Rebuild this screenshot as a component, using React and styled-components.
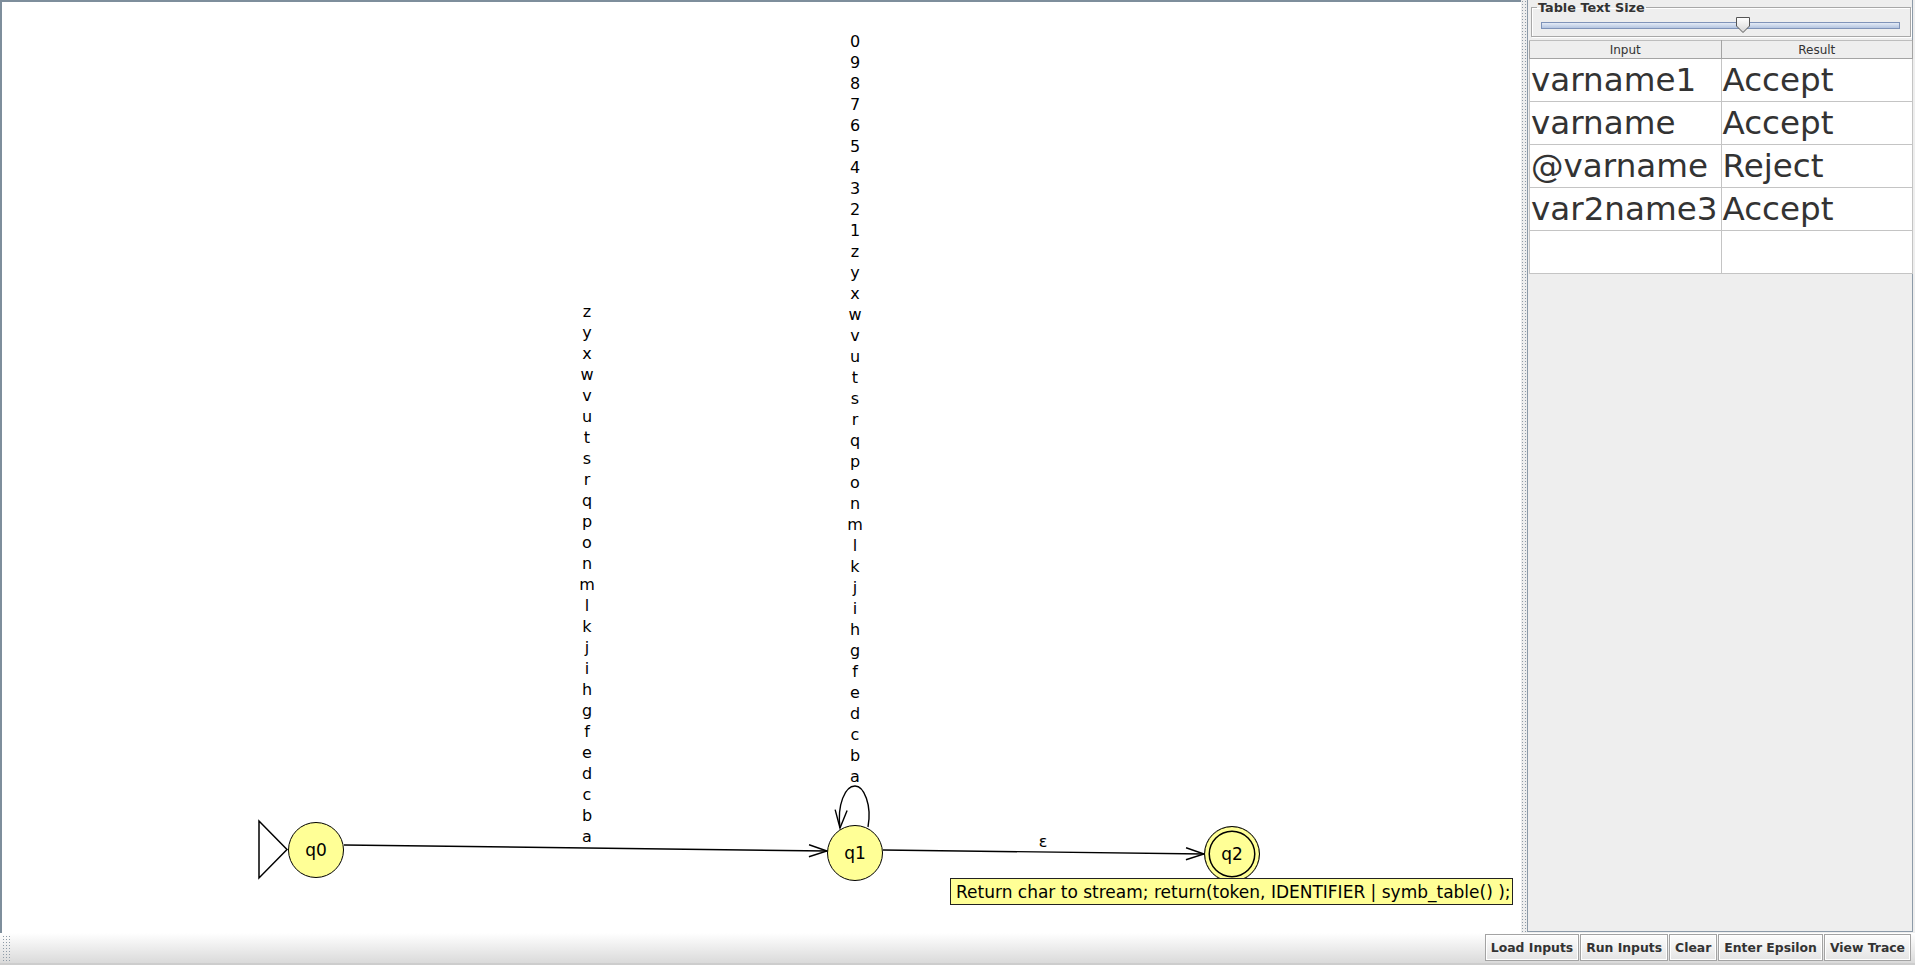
import styled, { createGlobalStyle, css } from 'styled-components'

const GlobalStyle = createGlobalStyle`
  html, body {
    margin: 0;
    padding: 0;
    overflow: hidden;
  }
  body {
    background: #eeeeee;
    font-family: "DejaVu Sans", "Liberation Sans", sans-serif;
    color: #333333;
  }
`

const Window = styled.div`
  width: 1915px;
  height: 965px;
  display: flex;
  flex-direction: column;
`

const Main = styled.div`
  display: flex;
  height: 933px;
  flex: none;
`

const Canvas = styled.div`
  position: relative;
  width: 1521px;
  flex: none;
  background: #ffffff;
  box-shadow: inset 2px 2px 0 #7e8e9c;
  overflow: hidden;
`

const Edges = styled.svg`
  position: absolute;
  left: 0;
  top: 0;
`

const Divider = styled.div`
  width: 6px;
  flex: none;
  background-color: #eeeeee;
  background-image: radial-gradient(circle, #8e9ba7 0.8px, transparent 1px);
  background-size: 3px 3px;
  background-position: 0 0;
`

const LabelStack = styled.div`
  position: absolute;
  left: ${p => p.$x}px;
  top: ${p => p.$y}px;
  transform: translateX(-50%);
  display: flex;
  flex-direction: column;
  align-items: center;
  font-size: 16px;
  line-height: 21px;
  color: #000000;
`

const State = styled.div`
  position: absolute;
  left: ${p => p.$x - 28}px;
  top: ${p => p.$y - 28}px;
  width: 56px;
  height: 56px;
  box-sizing: border-box;
  border-radius: 50%;
  border: 1.5px solid #000000;
  background: #ffff96;
  display: flex;
  align-items: center;
  justify-content: center;
  font-size: 17px;
  color: #000000;
  ${p => p.$final && css`
    box-shadow: inset 0 0 0 3.5px #ffff96, inset 0 0 0 5px #000000;
  `}
`

const Note = styled.div`
  position: absolute;
  left: 950px;
  top: 878px;
  width: 563px;
  height: 27px;
  box-sizing: border-box;
  border: 1px solid #222222;
  background: #ffff96;
  font-size: 17px;
  line-height: 27px;
  padding-left: 5px;
  white-space: nowrap;
  color: #000000;
  z-index: 2;
`

const RightPanel = styled.div`
  width: 386px;
  flex: none;
  box-sizing: border-box;
  margin-bottom: 1px;
  border-left: 1px solid #8c9aa8;
  border-right: 1px solid #8c9aa8;
  border-bottom: 1px solid #8c9aa8;
  padding-left: 1px;
  display: flex;
  flex-direction: column;
  background: #eeeeee;
`

const GroupBox = styled.fieldset`
  margin: 0 1px 0 2px;
  padding: 0 10px 1px 9px;
  border: 1px solid #a8a8a8;
  box-shadow: inset 1px 1px 0 #ffffff, 1px 1px 0 #ffffff;
  min-width: 0;
`

const Legend = styled.legend`
  font-size: 12.8px;
  font-weight: bold;
  line-height: 15px;
  padding: 0 1px;
  margin-left: -4px;
  color: #333333;
`

const SliderRow = styled.div`
  position: relative;
  height: 20px;
  display: flex;
  align-items: center;
`

const Track = styled.div`
  flex: 1;
  height: 5px;
  border: 1px solid #7f93b8;
  background: linear-gradient(#e4ebf6, #b3c4e0);
`

const Thumb = styled.svg`
  position: absolute;
  left: ${p => p.$left}px;
  top: 2px;
`

const Table = styled.table`
  margin-top: 3px;
  width: 384px;
  border-collapse: collapse;
  table-layout: fixed;
  background: #ffffff;
`

const HeadCell = styled.th`
  height: 17px;
  padding: 0;
  font-size: 12px;
  font-weight: normal;
  color: #333333;
  background: #eeeeee;
  border: 1px solid #a4a4a4;
  border-top-color: #bdbdbd;
  text-align: center;
`

const Cell = styled.td`
  height: 42px;
  padding: 0 0 0 1px;
  font-size: 32.6px;
  line-height: 38px;
  color: #333333;
  border: 1px solid #c4c4c4;
  white-space: nowrap;
  overflow: hidden;
`

const BottomBar = styled.div`
  height: 32px;
  flex: none;
  box-sizing: border-box;
  display: flex;
  justify-content: space-between;
  align-items: flex-start;
  padding: 1px 4px 0 2px;
  background: linear-gradient(#ffffff, #dadada);
  border-bottom: 2px solid #cdcdcd;
`

const Grip = styled.div`
  width: 10px;
  height: 26px;
  margin-top: 1px;
  background-image: radial-gradient(circle, #8e9ba7 0.8px, transparent 1px);
  background-size: 3px 3px;
`

const Buttons = styled.div`
  display: flex;
  gap: 1px;
`

const Button = styled.button`
  height: 27px;
  padding: 0 5px;
  font-family: "DejaVu Sans", sans-serif;
  font-weight: bold;
  font-size: 12.4px;
  color: #333333;
  background: linear-gradient(#fdfdfd, #e4e4e4);
  border: 1px solid #a3a3a3;
  box-shadow: inset 0 0 0 1px #ffffff;
  border-radius: 0;
`

const letters = 'zyxwvutsrqponmlkjihgfedcba'.split('')
const loopLabels = '0987654321'.split('').concat(letters)

const rows = [
  ['varname1', 'Accept'],
  ['varname', 'Accept'],
  ['@varname', 'Reject'],
  ['var2name3', 'Accept'],
  ['', ''],
]

function Arrow({ x, y, dx, dy }) {
  // open arrow head, tip at (x, y), pointing along (dx, dy)
  const len = Math.hypot(dx, dy)
  const ux = dx / len
  const uy = dy / len
  const bx = x - ux * 18
  const by = y - uy * 18
  const p1 = `${bx - uy * 6},${by + ux * 6}`
  const p2 = `${bx + uy * 6},${by - ux * 6}`
  return <polyline points={`${p1} ${x},${y} ${p2}`} fill="none" stroke="#000" strokeWidth="1.4" />
}

export default function App() {
  return (
    <Window>
      <GlobalStyle />
      <Main>
        <Canvas>
          <Edges width="1521" height="933">
            <polygon points="259,821 287,849.5 259,878" fill="#fff" stroke="#000" strokeWidth="1.5" />
            <line x1="344" y1="845" x2="827" y2="851" stroke="#000" strokeWidth="1.4" />
            <Arrow x={827} y={851} dx={483} dy={6} />
            <line x1="883" y1="850" x2="1204" y2="854" stroke="#000" strokeWidth="1.4" />
            <Arrow x={1204} y={854} dx={321} dy={4} />
            <path d="M868 827 C872 805 864 786 855 786 C845 786 837 805 840 828" fill="none" stroke="#000" strokeWidth="1.4" />
            <Arrow x={840} y={828} dx={-1} dy={16} />
          </Edges>

          <LabelStack $x={587} $y={301}>
            {letters.map(l => <span key={l}>{l}</span>)}
          </LabelStack>
          <LabelStack $x={855} $y={31}>
            {loopLabels.map(l => <span key={l}>{l}</span>)}
          </LabelStack>
          <LabelStack $x={1043} $y={831}>
            <span>ε</span>
          </LabelStack>

          <State $x={316} $y={850}>q0</State>
          <State $x={855} $y={853}>q1</State>
          <State $x={1232} $y={854} $final>q2</State>

          <Note>Return char to stream; return(token, IDENTIFIER | symb_table() );</Note>
        </Canvas>

        <Divider />

        <RightPanel>
          <GroupBox>
            <Legend>Table Text Size</Legend>
            <SliderRow>
              <Track />
              <Thumb $left={194} width="16" height="16" viewBox="0 0 16 16">
                <defs>
                  <linearGradient id="thumbFill" x1="0" y1="0" x2="0" y2="1">
                    <stop offset="0" stopColor="#ffffff" />
                    <stop offset="1" stopColor="#d6d6d6" />
                  </linearGradient>
                </defs>
                <path d="M1.5 0.5 H14.5 V9 L8 15.5 L1.5 9 Z" fill="url(#thumbFill)" stroke="#555" strokeWidth="1" />
              </Thumb>
            </SliderRow>
          </GroupBox>

          <Table>
            <thead>
              <tr>
                <HeadCell>Input</HeadCell>
                <HeadCell>Result</HeadCell>
              </tr>
            </thead>
            <tbody>
              {rows.map((r, i) => (
                <tr key={i}>
                  <Cell>{r[0]}</Cell>
                  <Cell>{r[1]}</Cell>
                </tr>
              ))}
            </tbody>
          </Table>
        </RightPanel>
      </Main>

      <BottomBar>
        <Grip />
        <Buttons>
          <Button>Load Inputs</Button>
          <Button>Run Inputs</Button>
          <Button>Clear</Button>
          <Button>Enter Epsilon</Button>
          <Button>View Trace</Button>
        </Buttons>
      </BottomBar>
    </Window>
  )
}
